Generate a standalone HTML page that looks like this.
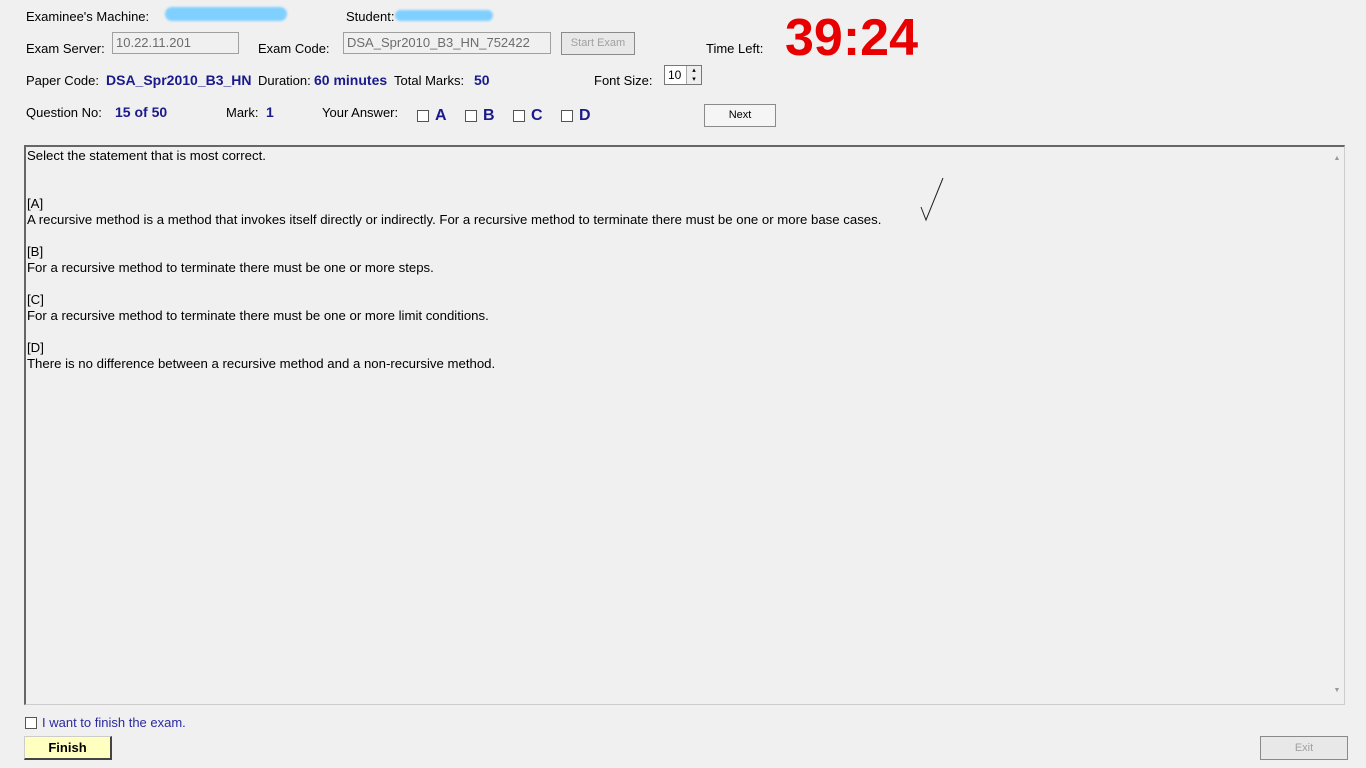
<!DOCTYPE html>
<html><head><meta charset="utf-8"><style>
body{margin:0;width:1366px;height:768px;background:#f0f0f0;font-family:"Liberation Sans",sans-serif;font-size:13px;color:#000;position:relative;overflow:hidden}
.a{position:absolute;white-space:nowrap}
.b{color:#1a1a8c;font-weight:bold;font-size:14px}
.in{position:absolute;border:1px solid #a0a0a0;background:#f0f0f0;color:#6d6d6d;font-size:13px;padding:2px 3px;box-sizing:border-box}
.btn{position:absolute;border:1px solid #8a8a8a;background:#e8e8e8;box-sizing:border-box;text-align:center;font-size:11px}
.cb{position:absolute;width:10px;height:10px;border:1px solid #555;background:#fff}
.opt{position:absolute;color:#1a1a8c;font-weight:bold;font-size:16px}
.txt{position:absolute;left:24px;top:145px;width:1321px;height:560px;border:1px solid #ccc;border-top:2px solid #666;border-left:2px solid #666;box-sizing:border-box;background:#f0f0f0;font-size:13.2px;line-height:16px}
</style></head><body>
<div class="a" style="left:26px;top:9px">Examinee's Machine:</div>
<div class="a" style="left:165px;top:7px;width:122px;height:14px;background:#80d0ff;border-radius:8px;filter:blur(1px)"></div>
<div class="a" style="left:346px;top:9px">Student:</div>
<div class="a" style="left:395px;top:10px;width:98px;height:11px;background:#80d0ff;border-radius:6px;filter:blur(1px)"></div>
<div class="a" style="left:26px;top:41px">Exam Server:</div>
<div class="in" style="left:112px;top:32px;width:127px;height:22px">10.22.11.201</div>
<div class="a" style="left:258px;top:41px">Exam Code:</div>
<div class="in" style="left:343px;top:32px;width:208px;height:22px">DSA_Spr2010_B3_HN_752422</div>
<div class="btn" style="left:561px;top:32px;width:74px;height:23px;line-height:21px;color:#a0a0a0">Start Exam</div>
<div class="a" style="left:706px;top:41px">Time Left:</div>
<div class="a" style="left:785px;top:8px;color:#e80000;font-weight:bold;font-size:52px">39:24</div>
<div class="a" style="left:26px;top:73px">Paper Code:</div>
<div class="a b" style="left:106px;top:72px">DSA_Spr2010_B3_HN</div>
<div class="a" style="left:258px;top:73px">Duration:</div>
<div class="a b" style="left:314px;top:72px">60 minutes</div>
<div class="a" style="left:394px;top:73px">Total Marks:</div>
<div class="a b" style="left:474px;top:72px">50</div>
<div class="a" style="left:594px;top:73px">Font Size:</div>
<div class="a" style="left:664px;top:65px;width:38px;height:20px;border:1px solid #777;background:#fff;box-sizing:border-box;font-size:12px;padding:2px 3px">10<span style="position:absolute;right:0;top:0;width:14px;height:18px;background:#eee;border-left:1px solid #aaa;font-size:7px;line-height:9px;text-align:center">▴<br>▾</span></div>
<div class="a" style="left:26px;top:105px">Question No:</div>
<div class="a b" style="left:115px;top:104px">15 of 50</div>
<div class="a" style="left:226px;top:105px">Mark:</div>
<div class="a b" style="left:266px;top:104px">1</div>
<div class="a" style="left:322px;top:105px">Your Answer:</div>
<div class="cb" style="left:417px;top:110px"></div><div class="opt" style="left:435px;top:107px">A</div>
<div class="cb" style="left:465px;top:110px"></div><div class="opt" style="left:483px;top:107px">B</div>
<div class="cb" style="left:513px;top:110px"></div><div class="opt" style="left:531px;top:107px">C</div>
<div class="cb" style="left:561px;top:110px"></div><div class="opt" style="left:579px;top:107px">D</div>
<div class="btn" style="left:704px;top:104px;width:72px;height:23px;line-height:21px;background:#f5f5f5">Next</div>
<div class="txt">
<div style="position:absolute;left:1px;top:1px">Select the statement that is most correct.<br><br><br>[A]<br>A recursive method is a method that invokes itself directly or indirectly. For a recursive method to terminate there must be one or more base cases.<br><br>[B]<br>For a recursive method to terminate there must be one or more steps.<br><br>[C]<br>For a recursive method to terminate there must be one or more limit conditions.<br><br>[D]<br>There is no difference between a recursive method and a non-recursive method.</div>
<div style="position:absolute;right:0;top:0;width:14px;height:556px;background:#f0f0f0;font-size:7px;color:#999;text-align:center"><div style="margin-top:4px">▲</div><div style="position:absolute;bottom:4px;width:14px">▼</div></div>
<svg style="position:absolute;left:894px;top:30px" width="30" height="46"><path d="M1 30 L6 43 L23 1" stroke="#222" fill="none" stroke-width="1"/></svg>
</div>
<div class="cb" style="left:25px;top:717px"></div>
<div class="a" style="left:42px;top:715px;color:#2a2aa0">I want to finish the exam.</div>
<div class="a" style="left:24px;top:736px;width:88px;height:24px;background:#ffffc0;border:1px solid #ccc;border-right:2px solid #444;border-bottom:2px solid #444;box-sizing:border-box;text-align:center;font-weight:bold;font-size:13px;line-height:22px">Finish</div>
<div class="btn" style="left:1260px;top:736px;width:88px;height:24px;line-height:22px;color:#a0a0a0">Exit</div>
</body></html>
